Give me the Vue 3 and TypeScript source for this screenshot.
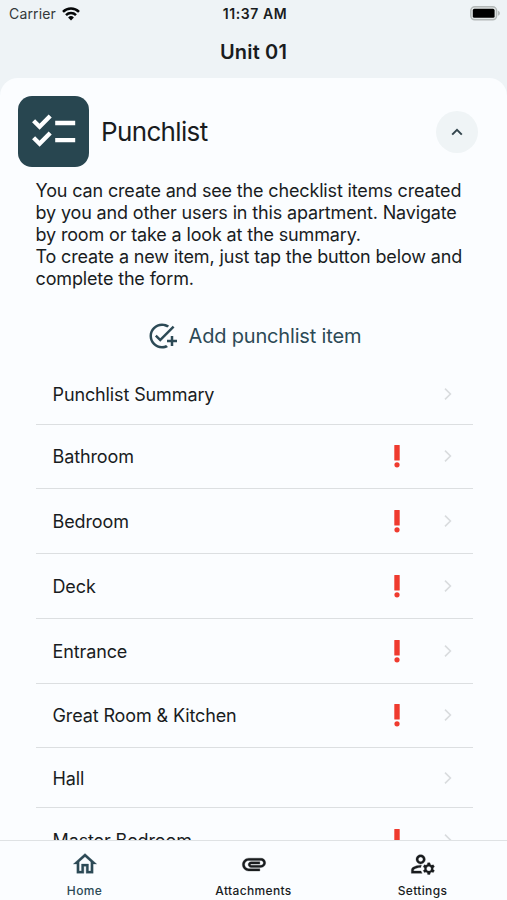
<script setup lang="ts">
interface Room {
  name: string
  alert: boolean
}

interface Tab {
  label: string
  path: string
  active: boolean
}

const rooms: Room[] = [
  { name: 'Punchlist Summary', alert: false },
  { name: 'Bathroom', alert: true },
  { name: 'Bedroom', alert: true },
  { name: 'Deck', alert: true },
  { name: 'Entrance', alert: true },
  { name: 'Great Room & Kitchen', alert: true },
  { name: 'Hall', alert: false },
  { name: 'Master Bedroom', alert: true },
]

const tabs: Tab[] = [
  {
    label: 'Home',
    active: true,
    path: 'M12 5.69l5 4.5V18h-2v-6H9v6H7v-7.81l5-4.5M12 3L2 12h3v8h6v-6h2v6h6v-8h3L12 3z',
  },
  {
    label: 'Attachments',
    active: false,
    path: 'M2 12.5C2 9.46 4.46 7 7.5 7H18c2.21 0 4 1.79 4 4s-1.79 4-4 4H9.5C8.12 15 7 13.88 7 12.5S8.12 10 9.5 10H17v2H9.41c-.55 0-.55 1 0 1H18c1.1 0 2-.9 2-2s-.9-2-2-2H7.5C5.57 9 4 10.57 4 12.5S5.57 16 7.5 16H17v2H7.5C4.46 18 2 15.54 2 12.5z',
  },
  {
    label: 'Settings',
    active: false,
    path: 'M4 18v-.65c0-.34.16-.66.41-.81C6.1 15.53 8.03 15 10 15c.03 0 .05 0 .08.01.1-.7.3-1.37.59-1.98-.22-.02-.44-.03-.67-.03-2.42 0-4.68.67-6.61 1.82-.88.52-1.39 1.5-1.39 2.53V20h9.26c-.42-.6-.75-1.28-.97-2H4zM10 12c2.21 0 4-1.79 4-4s-1.79-4-4-4-4 1.79-4 4 1.79 4 4 4zm0-6c1.1 0 2 .9 2 2s-.9 2-2 2-2-.9-2-2 .9-2 2-2zM20.75 16c0-.22-.03-.42-.06-.63l1.14-1.01-1-1.73-1.45.49c-.32-.27-.68-.48-1.08-.63L18 11h-2l-.3 1.49c-.4.15-.76.36-1.08.63l-1.45-.49-1 1.73 1.14 1.01c-.03.21-.06.41-.06.63s.03.42.06.63l-1.14 1.01 1 1.73 1.45-.49c.32.27.68.48 1.08.63L16 21h2l.3-1.49c.4-.15.76-.36 1.08-.63l1.45.49 1-1.73-1.14-1.01c.03-.21.06-.41.06-.63zM17 18c-1.1 0-2-.9-2-2s.9-2 2-2 2 .9 2 2-.9 2-2 2z',
  },
]
</script>

<template>
  <div class="screen">
    <header class="status">
      <div class="carrier">
        <span class="carrier-name">Carrier</span>
        <svg class="wifi" width="18" height="14" viewBox="0 0 18 14" fill="none" stroke="#050708" stroke-width="2.5">
          <path d="M1 4.9a11.4 11.4 0 0 1 16 0" />
          <path d="M4 8.1a7.2 7.2 0 0 1 10 0" />
          <path d="M9 13.6L6.1 10.4a4.2 4.2 0 0 1 5.8 0z" fill="#050708" stroke="none" />
        </svg>
      </div>
      <span class="clock">11:37 AM</span>
      <svg class="battery" width="31" height="15" viewBox="0 0 31 15">
        <rect x="0.8" y="0.8" width="25.8" height="13" rx="4" fill="#e4e8e8" stroke="#b3b8b8" stroke-width="1.5" />
        <rect x="2.8" y="2.8" width="21.8" height="9" rx="1.6" fill="#000" />
        <path d="M28.1 4.8c2.3.7 2.3 4.3 0 5z" fill="#adb2b2" />
      </svg>
    </header>
    <h1 class="title">Unit 01</h1>

    <main class="sheet">
      <div class="head">
        <svg class="tile" width="71" height="71" viewBox="0 0 71 71">
          <rect width="71" height="71" rx="14" fill="#284650" />
          <g fill="none" stroke="#fff" stroke-width="4.4">
            <path d="M15.6 24.8l6 5.9L32.2 20" />
            <path d="M15.6 41.8l6 5.9L32.2 37" />
            <path d="M37.2 27h20M37.2 44.1h20" />
          </g>
        </svg>
        <h2 class="heading">Punchlist</h2>
        <button class="collapse" aria-label="Collapse">
          <svg width="12" height="8" viewBox="0 0 12 8" fill="none" stroke="#34464e" stroke-width="2">
            <path d="M1.2 6.6L6 1.8l4.8 4.8" />
          </svg>
        </button>
      </div>

      <p class="intro">
        You can create and see the checklist items created<br />
        by you and other users in this apartment. Navigate<br />
        by room or take a look at the summary.<br />
        To create a new item, just tap the button below and<br />
        complete the form.
      </p>

      <button class="add">
        <svg width="30" height="30" viewBox="0 0 24 24" fill="currentColor">
          <path d="M22 5.18L10.59 16.6l-4.24-4.24 1.41-1.41 2.83 2.83 10-10L22 5.18zM12 20c-4.41 0-8-3.59-8-8s3.59-8 8-8c1.57 0 3.04.46 4.28 1.25l1.45-1.45C16.1 2.67 14.13 2 12 2 6.48 2 2 6.48 2 12s4.48 10 10 10c1.73 0 3.36-.44 4.78-1.22l-1.5-1.5c-1 .46-2.11.72-3.28.72zm7-5h-3v2h3v3h2v-3h3v-2h-3v-3h-2v3z" />
        </svg>
        <span class="add-label">Add punchlist item</span>
      </button>

      <ul class="rooms">
        <li v-for="room in rooms" :key="room.name" class="room" :class="{ flagged: room.alert }">
          <span class="room-name">{{ room.name }}</span>
          <svg v-if="room.alert" class="flag" width="6" height="24" viewBox="0 0 6 24" fill="#ef3b2f">
            <rect x="0.3" y="1" width="5.4" height="15.4" rx="0.5" />
            <circle cx="3" cy="20.8" r="2.6" />
          </svg>
          <svg class="chevron" width="8" height="14" viewBox="0 0 8 14" fill="none" stroke="#d9dcde" stroke-width="1.6">
            <path d="M1 1.6L6.4 7 1 12.4" />
          </svg>
        </li>
      </ul>
    </main>

    <nav class="tabs">
      <a v-for="tab in tabs" :key="tab.label" class="tab" :class="{ active: tab.active }">
        <svg width="28" height="28" viewBox="0 0 24 24" fill="currentColor" stroke="currentColor" stroke-width="0.25">
          <path :d="tab.path" />
        </svg>
        <span class="tab-label">{{ tab.label }}</span>
      </a>
    </nav>
  </div>
</template>

<style>
body {
  margin: 0;
  background: #eef3f6;
}
</style>

<style scoped>
.screen {
  display: flex;
  flex-direction: column;
  height: 900px;
  overflow: hidden;
  background: #eef3f6;
  color: #191c1e;
  font-family: Inter, "Liberation Sans", sans-serif;
}
.status {
  display: grid;
  grid-template-columns: 1fr auto 1fr;
  align-items: center;
  flex: none;
  height: 27px;
  padding: 0 6px 0 9px;
}
.carrier {
  display: flex;
  align-items: center;
  gap: 6px;
}
.carrier-name {
  font-size: 14px;
  letter-spacing: 0.15px;
  color: #34383a;
}
.clock {
  font-size: 14px;
  font-weight: 600;
  letter-spacing: 0.6px;
}
.battery {
  justify-self: end;
}
.title {
  flex: none;
  height: 51px;
  margin: 0;
  line-height: 51px;
  text-align: center;
  font-size: 20px;
  font-weight: 600;
  letter-spacing: 0.15px;
}
.sheet {
  flex: 1;
  min-height: 0;
  box-sizing: border-box;
  overflow: hidden;
  padding: 18px 34.5px 0 35.5px;
  border-radius: 18px 18px 0 0;
  background: #fbfdff;
}
.head {
  display: flex;
  align-items: center;
  margin: 0 -5px 0 -17.5px;
}
.heading {
  flex: 1;
  margin: 0 0 0 12px;
  font-size: 26px;
  font-weight: 400;
  letter-spacing: -0.65px;
}
.collapse {
  display: flex;
  align-items: center;
  justify-content: center;
  width: 42px;
  height: 42px;
  padding: 0;
  border: 0;
  border-radius: 50%;
  background: #eff4f6;
}
.intro {
  margin: 13px 0 0;
  font-size: 18px;
  line-height: 22px;
  letter-spacing: -0.15px;
  white-space: nowrap;
}
.add {
  display: flex;
  align-items: center;
  gap: 12px;
  margin: 30.5px 0 0 111px;
  padding: 0;
  border: 0;
  background: none;
  color: #2c4a56;
  font-family: inherit;
}
.add-label {
  padding-top: 1px;
  font-size: 20px;
  letter-spacing: -0.17px;
  white-space: nowrap;
}
.rooms {
  margin: 14px 0 0;
  padding: 0;
  list-style: none;
}
.room {
  display: flex;
  align-items: center;
  box-sizing: border-box;
  height: 60px;
  padding: 0 20.5px 0 17px;
  border-bottom: 1.5px solid #dcdfe1;
}
.room.flagged {
  height: 64.75px;
}
.room-name {
  flex: 1;
  padding-top: 1px;
  font-size: 18px;
  letter-spacing: -0.12px;
}
.flag {
  margin-right: 44px;
}
.tabs {
  display: grid;
  grid-template-columns: repeat(3, 1fr);
  flex: none;
  box-sizing: border-box;
  height: 60px;
  border-top: 1px solid #dfe2e4;
  background: #fbfdff;
}
.tab {
  display: flex;
  flex-direction: column;
  align-items: center;
  padding-top: 8.5px;
  color: #191c1e;
}
.tab.active {
  color: #2c4a56;
}
.tab-label {
  margin-top: 5.5px;
  font-size: 12px;
  font-weight: 500;
  line-height: 16px;
  letter-spacing: 0.35px;
}
</style>
